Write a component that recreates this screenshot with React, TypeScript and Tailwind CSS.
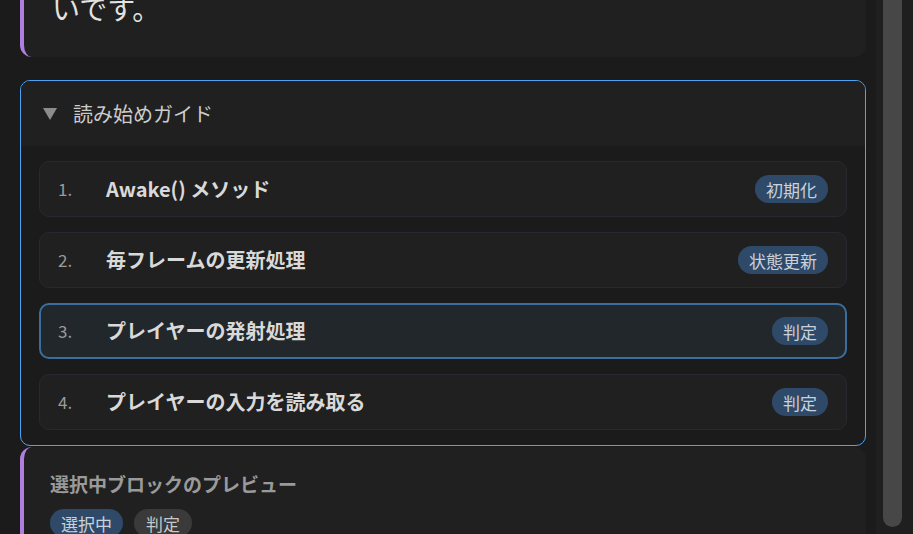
const font = {
  fontFamily: '"Noto Sans CJK JP", "Noto Sans", sans-serif',
};

interface GuideItem {
  no: string;
  title: string;
  tag: string;
  active?: boolean;
}

const items: GuideItem[] = [
  { no: "1.", title: "Awake() メソッド", tag: "初期化" },
  { no: "2.", title: "毎フレームの更新処理", tag: "状態更新" },
  { no: "3.", title: "プレイヤーの発射処理", tag: "判定", active: true },
  { no: "4.", title: "プレイヤーの入力を読み取る", tag: "判定" },
];

function Tag({ label, grey }: { label: string; grey?: boolean }) {
  return (
    <span
      className={`flex h-[28px] items-center rounded-full text-[17px] leading-none ${
        grey
          ? "bg-[#3a3a3a] px-[12px] text-[#c8c8c8]"
          : "bg-[#2f4a69] px-[11px] text-[#c9d1db]"
      }`}
    >
      {label}
    </span>
  );
}

function Row({ item }: { item: GuideItem }) {
  return (
    <div
      className={`flex h-[56px] items-center rounded-[10px] ${
        item.active
          ? "border-2 border-[#3a6e9f] bg-[#22272c] px-[17px]"
          : "border border-[#262a30] bg-[#202020] px-[18px]"
      }`}
    >
      <span className="w-[48px] text-[17px] text-[#9a9a9a]">{item.no}</span>
      <span className="flex-1 text-[20px] font-bold text-[#d9d9d9]">
        {item.title}
      </span>
      <Tag label={item.tag} />
    </div>
  );
}

export default function App() {
  return (
    <div
      className="flex h-[534px] w-[913px] overflow-hidden bg-[#1b1b1b]"
      style={font}
    >
      <div className="flex-1 pl-[20px] pr-[10px]">
        {/* intro card, scrolled partly out of view */}
        <div className="-mt-[30px] rounded-[12px] border-l-4 border-[#b07ee0] bg-[#202020] pb-[28px] pl-[28px] pt-[19px]">
          <p className="-mt-[2px] text-[28px] leading-[42px] text-[#e2e2e2]">
            いです。
          </p>
        </div>

        <div className="mt-[23px] overflow-hidden rounded-[10px] border border-[#4da2f5] bg-[#1b1b1b]">
          <div className="flex h-[65px] items-center bg-[#202020] pl-[22px]">
            <svg width="14" height="12" viewBox="0 0 14 12">
              <polygon points="0,0 14,0 7,12" fill="#8c8c8c" />
            </svg>
            <span className="ml-[16px] text-[20px] text-[#cccccc]">
              読み始めガイド
            </span>
          </div>
          <div className="flex flex-col gap-[15px] px-[18px] pb-[15px] pt-[15px]">
            {items.map((item) => (
              <Row key={item.no} item={item} />
            ))}
          </div>
        </div>

        <div className="mt-[1px] rounded-[12px] border-l-4 border-[#b07ee0] bg-[#202020] pb-[20px] pl-[26px] pt-[23px]">
          <h2 className="text-[19px] font-bold leading-[28px] text-[#9a9a9a]">
            選択中ブロックのプレビュー
          </h2>
          <div className="mt-[11px] flex gap-[11px]">
            <Tag label="選択中" />
            <Tag label="判定" grey />
          </div>
        </div>
      </div>

      {/* scrollbar */}
      <div className="w-[37px] bg-[#1f1f1f] pl-[7px]">
        <div className="h-[527px] w-[19px] rounded-b-full bg-[#474747]" />
      </div>
    </div>
  );
}
